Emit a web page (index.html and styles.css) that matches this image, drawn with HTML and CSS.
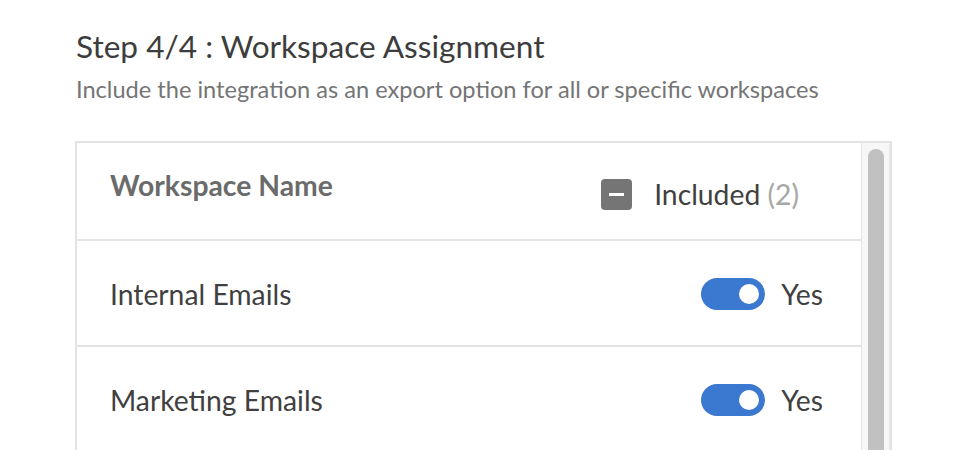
FILE: index.html
```html
<!DOCTYPE html>
<html lang="en">
  <head>
    <meta charset="UTF-8" />
    <meta name="viewport" content="width=device-width, initial-scale=1.0" />
    <title>Workspace Assignment</title>
    <link rel="stylesheet" href="styles.css">
  </head>
  <body>
    <div class="step">
      <h1 class="step-title">Step 4/4 : Workspace Assignment</h1>
      <p class="step-desc">Include the integration as an export option for all or specific workspaces</p>

      <div class="panel">
        <div class="list">
          <div class="row head">
            <span class="name">Workspace Name</span>
            <span class="action head-action">
              <span class="check-mixed"><span class="bar"></span></span>
              <span class="included">Included <span class="count">(2)</span></span>
            </span>
          </div>
          <div class="row">
            <span class="name">Internal Emails</span>
            <span class="action">
              <span class="toggle on"><span class="knob"></span></span>
              <span class="toggle-label">Yes</span>
            </span>
          </div>
          <div class="row">
            <span class="name">Marketing Emails</span>
            <span class="action">
              <span class="toggle on"><span class="knob"></span></span>
              <span class="toggle-label">Yes</span>
            </span>
          </div>
        </div>
        <div class="rail">
          <div class="thumb"></div>
        </div>
      </div>
    </div>
  </body>
</html>
```

FILE: styles.css
```css
html,
body {
  margin: 0;
  height: 100%;
  overflow: hidden;
  background: #fff;
}
body {
  font-family: Lato, "Open Sans", sans-serif;
  color: #404040;
}
.step {
  padding: 26px 82px 0 75px;
}
.step-title {
  margin: 0 0 0 1px;
  font-size: 31.6px;
  font-weight: 400;
  line-height: 40px;
  color: #3d3d3d;
}
.step-desc {
  margin: 8px 0 0 1px;
  font-size: 23.6px;
  line-height: 30px;
  color: #757575;
}
.panel {
  display: flex;
  margin-top: 37px;
  height: 320px;
  border: 2px solid #e3e3e3;
  border-bottom: none;
}
.list {
  flex: 1;
  border-right: 1px solid #e6e6e6;
}
.row {
  display: flex;
  align-items: center;
  height: 102px;
  padding: 2px 0 0 33px;
  border-bottom: 2px solid #e3e3e3;
  font-size: 28.3px;
}
.row.head {
  height: 94px;
}
.name {
  flex: 1;
}
.head .name {
  font-weight: 700;
  color: #6b6b6b;
  margin-top: -14px;
}
.action {
  display: flex;
  align-items: center;
  padding-right: 38px;
}
.head-action {
  padding-right: 62px;
  margin-top: 4px;
}
.check-mixed {
  display: flex;
  align-items: center;
  justify-content: center;
  width: 31px;
  height: 31px;
  border-radius: 4px;
  background: #757575;
  margin-right: 22px;
}
.check-mixed .bar {
  width: 15px;
  height: 3px;
  background: #fff;
}
.included {
  color: #404040;
}
.count {
  color: #a6a6a6;
}
.toggle {
  display: flex;
  align-items: center;
  justify-content: flex-end;
  width: 64px;
  height: 32px;
  padding: 0 6px;
  box-sizing: border-box;
  border-radius: 16px;
  background: #3b78d0;
  margin-right: 16px;
}
.toggle .knob {
  width: 20px;
  height: 20px;
  border-radius: 50%;
  background: #fff;
}
.toggle-label {
  color: #404040;
}
.rail {
  width: 28px;
  background: #f7f7f7;
  border-right: 1px solid #ececec;
  padding: 6px 0 0 6px;
  box-sizing: border-box;
}
.thumb {
  width: 16px;
  height: 400px;
  border-radius: 8px 8px 0 0;
  background: #c1c1c1;
}
```
